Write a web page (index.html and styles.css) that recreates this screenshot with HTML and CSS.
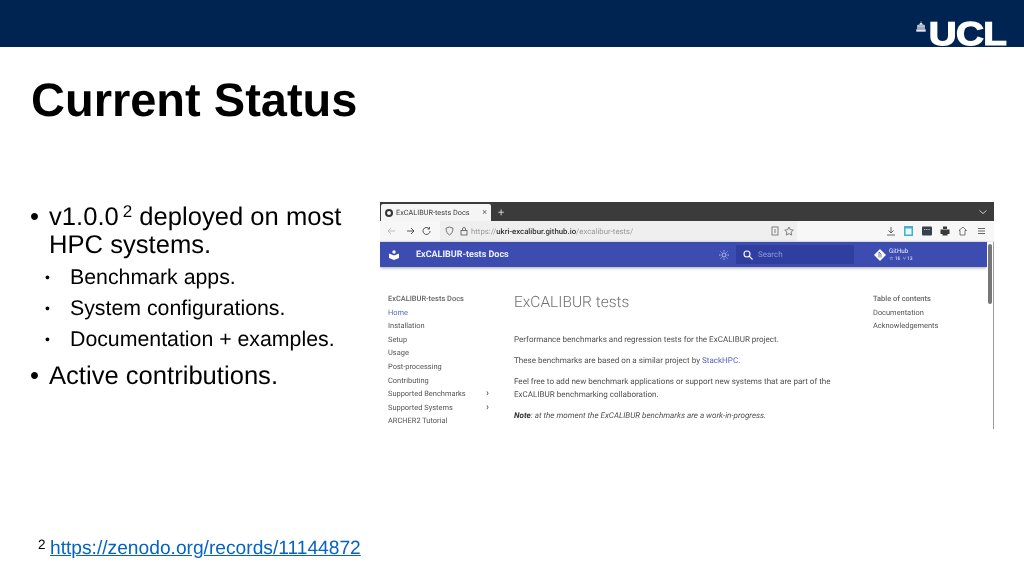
FILE: index.html
```html
<!DOCTYPE html>
<html lang="en">
<head>
<meta charset="utf-8">
<title>Current Status</title>
<link rel="stylesheet" href="styles.css">
</head>
<body>
<div class="slide">
  <header class="band">
    <div class="logo">
      <svg class="portico" width="10" height="11" viewBox="0 0 10 11"><path d="M5 0v1.500M4 2h2v1H4zM1 4.500L5 3l4 1.500zM1.500 5h7v3h-7zM.5 8.500h9v2h-9z" fill="#dfe3ea" stroke="#dfe3ea" stroke-width=".4"/><path d="M3 5.500v2.500M5 5.500v2.500M7 5.500v2.500" stroke="#002452" stroke-width=".6"/></svg>
      <span class="wordmark">UCL</span>
    </div>
  </header>
  <h1 class="title">Current Status</h1>
  <main class="content">
    <div class="points">
      <p class="lvl1"><span class="dot">•</span><span>v1.0.0<sup class="ref">2</sup> deployed on most<br>HPC systems.</span></p>
      <p class="lvl2"><span class="dot2">•</span><span>Benchmark apps.</span></p>
      <p class="lvl2"><span class="dot2">•</span><span>System configurations.</span></p>
      <p class="lvl2"><span class="dot2">•</span><span>Documentation + examples.</span></p>
      <p class="lvl1 last"><span class="dot">•</span><span>Active contributions.</span></p>
    </div>
    <div class="shot">
      <div class="tabs">
        <div class="tab">
          <svg width="8" height="8" viewBox="0 0 8 8"><circle cx="4" cy="4" r="3" fill="none" stroke="#333" stroke-width="2"/></svg>
          <span class="tab-name">ExCALIBUR-tests Docs</span>
          <span class="tab-x">×</span>
        </div>
        <span class="plus">+</span>
        <svg class="chev" width="10" height="6" viewBox="0 0 10 6"><path d="M1.500 1.500L5 4.500l3.500-3" fill="none" stroke="#ccc"/></svg>
      </div>
      <div class="toolbar">
        <svg class="nav" width="44" height="10" viewBox="0 0 44 10" fill="none" stroke-width=".9"><path d="M8 5H1M4 2L1 5l3 3" stroke="#b8b8b8"/><path d="M20 5h7M24 2l3 3-3 3" stroke="#444"/><path d="M43 5a3.500 3.500 0 1 1-1-2.500M42.500 1v2h-2" stroke="#444"/></svg>
        <div class="urlbar">
          <svg width="25" height="10" viewBox="0 0 25 10" fill="none" stroke="#555" stroke-width=".8"><path d="M4.500 1L8 2.200C8 5.500 6.500 8 4.500 9 2.500 8 1 5.500 1 2.200z"/><rect x="16" y="4.500" width="6" height="4.500"/><path d="M17.500 4.500V3a1.500 1.500 0 0 1 3 0v1.500"/></svg>
          <span class="url"><span class="faint">https://</span><b>ukri-excalibur.github.io</b><span class="faint">/excalibur-tests/</span></span>
          <svg class="url-end" width="24" height="10" viewBox="0 0 24 10" fill="none" stroke="#666" stroke-width=".8"><rect x="1" y="1" width="6" height="8"/><path d="M4 3v4"/><path d="M18 1l1.300 2.700 3 .4-2.200 2 .6 3-2.700-1.500-2.700 1.500.6-3-2.200-2 3-.4z"/></svg>
        </div>
        <div class="tools">
          <svg width="10" height="10" viewBox="0 0 10 10" fill="none" stroke="#555" stroke-width=".9"><path d="M5 1v6M2.500 4.500L5 7l2.500-2.500M1 9h8"/></svg>
          <svg width="10" height="10" viewBox="0 0 10 10"><rect width="9" height="10" fill="#3fb3c8"/><rect x="1.500" y="2.500" width="6" height="6" fill="#e8f6f8"/></svg>
          <svg width="10" height="10" viewBox="0 0 10 10"><rect width="10" height="9" y=".5" rx="1" fill="#36424a"/><path d="M2 3.500h6" stroke="#c6c6c6" stroke-dasharray="1 .8"/></svg>
          <svg width="10" height="10" viewBox="0 0 10 10"><path d="M3 .5h4V3H3zM.5 3.500h9V8h-2v1.500h-5V8h-2z" fill="#3a3a3a"/></svg>
          <svg width="10" height="10" viewBox="0 0 10 10" fill="none" stroke="#555" stroke-width=".8"><path d="M5 1L8.500 4.500 7 4.500V9H2V4.500H1z"/></svg>
          <svg width="10" height="10" viewBox="0 0 10 10" stroke="#666"><path d="M2 2.500h7M2 5h7M2 7.500h7"/></svg>
        </div>
      </div>
      <div class="page">
        <div class="doc">
          <div class="docbar">
            <svg class="doclogo" width="10" height="10" viewBox="0 0 10 10"><circle cx="5" cy="2" r="1.700" fill="#fff"/><path d="M0 3.500L5 5.500 10 3.500V8L5 10 0 8z" fill="#fff"/></svg>
            <span class="docname">ExCALIBUR-tests Docs</span>
            <svg class="sun" width="10" height="10" viewBox="0 0 10 10" fill="none" stroke="#e8eaf6" stroke-width=".7"><circle cx="5" cy="5" r="2"/><path d="M5 0v1.500M5 8.500V10M0 5h1.500M8.500 5H10M1.500 1.500l1 1M7.500 7.500l1 1M1.500 8.500l1-1M7.500 2.500l1-1"/></svg>
            <div class="search">
              <svg width="10" height="10" viewBox="0 0 10 10" fill="none" stroke="#fff" stroke-width="1.100"><circle cx="4" cy="4" r="3"/><path d="M6.200 6.200L9.500 9.500"/></svg>
              <span>Search</span>
            </div>
            <div class="repo">
              <svg width="12" height="12" viewBox="0 0 12 12"><path d="M6 0l6 6-6 6-6-6z" fill="#fff"/><path d="M5 3l2 2v3.500M5 3v5.500" stroke="#3c4cb0" stroke-width=".8" fill="none"/></svg>
              <div class="repo-text"><span>GitHub</span><span class="repo-facts">☆ 16 &nbsp;⑂ 13</span></div>
            </div>
          </div>
          <div class="docbody">
            <nav class="side">
              <div class="side-head">ExCALIBUR-tests Docs</div>
              <div class="active">Home</div>
              <div>Installation</div>
              <div>Setup</div>
              <div>Usage</div>
              <div>Post-processing</div>
              <div>Contributing</div>
              <div class="more"><span>Supported Benchmarks</span><span>›</span></div>
              <div class="more"><span>Supported Systems</span><span>›</span></div>
              <div>ARCHER2 Tutorial</div>
            </nav>
            <article class="article">
              <h2>ExCALIBUR tests</h2>
              <p>Performance benchmarks and regression tests for the ExCALIBUR project.</p>
              <p>These benchmarks are based on a similar project by <span class="link">StackHPC</span>.</p>
              <p>Feel free to add new benchmark applications or support new systems that are part of the<br>ExCALIBUR benchmarking collaboration.</p>
              <p><em><b>Note</b>: at the moment the ExCALIBUR benchmarks are a work-in-progress.</em></p>
            </article>
            <aside class="toc">
              <div class="side-head">Table of contents</div>
              <div>Documentation</div>
              <div>Acknowledgements</div>
            </aside>
          </div>
        </div>
        <div class="scrollbar"><div class="thumb"></div></div>
      </div>
    </div>
  </main>
  <footer class="foot"><sup class="foot-ref">2</sup><a class="foot-link" href="#">https://zenodo.org/records/11144872</a></footer>
</div>
</body>
</html>
```
FILE: styles.css
```css
* { box-sizing: border-box; }
html, body { margin: 0; padding: 0; }
body { width: 1024px; height: 576px; overflow: hidden; background: #fff; font-family: "Liberation Sans", Arial, sans-serif; color: #000; text-rendering: geometricPrecision; }
.slide { width: 1024px; height: 576px; display: flex; flex-direction: column; will-change: transform; }
.band { height: 47px; flex: none; background: #002452; display: flex; justify-content: flex-end; align-items: flex-end; padding-right: 18px; }
.logo { display: flex; align-items: flex-start; gap: 14px; height: 25px; }
.portico { margin-top: -1px; }
.wordmark { font-weight: 700; font-size: 33px; line-height: 24px; height: 25px; color: #fff; -webkit-text-stroke: 1.200px #fff; letter-spacing: -.5px; display: block; transform: scaleX(1.170); transform-origin: right center; }
.title { margin: 23px 0 0 31px; font-size: 47px; line-height: 60px; font-weight: 700; height: 60px; }
.content { display: flex; margin-top: 72px; height: 233px; flex: none; }
.points { width: 380px; flex: none; padding-top: 1px; }
.points p { margin: 0; display: flex; }
.lvl1 { font-size: 25.600px; line-height: 28px; padding-left: 30px; }
.dot { width: 19px; flex: none; }
.lvl2 { font-size: 21.300px; line-height: 31px; padding-left: 45px; }
.lvl1 + .lvl2 { margin-top: 3px !important; }
.dot2 { width: 25px; flex: none; font-size: 14px; }
.last { margin-top: 7px !important; }
.ref { font-size: 17px; line-height: 0; vertical-align: baseline; position: relative; top: -8px; margin: 0 0 0 4px; }
.shot { width: 614px; height: 227px; flex: none; font-family: Roboto, sans-serif; color: #555; filter: blur(.35px); display: flex; flex-direction: column; overflow: hidden; }
.tabs { height: 19px; flex: none; background: #3b3b3b; display: flex; align-items: flex-end; padding-left: 1px; }
.tab { width: 110px; height: 17px; background: #f5f5f5; border-radius: 2px 2px 0 0; display: flex; align-items: center; gap: 3px; padding-left: 4px; font-size: 7.300px; color: #444; }
.tab-name { flex: 1; }
.tab-x { padding-right: 4px; font-size: 9px; color: #666; }
.plus { color: #ccc; font-size: 11px; line-height: 17px; margin-left: 7px; }
.chev { margin: 0 6px 6px auto; }
.toolbar { height: 21px; flex: none; background: #f7f7f7; display: flex; align-items: center; padding-left: 7px; border-bottom: 1px solid #e8e8e8; }
.nav { flex: none; }
.urlbar { margin-left: 9px; width: 357px; height: 20px; background: #efefef; display: flex; align-items: center; padding: 0 2px 0 5px; font-size: 7.800px; gap: 1px; flex: none; }
.url { color: #333; flex: 1; white-space: nowrap; }
.url b { font-weight: 500; }
.faint { color: #9a9a9a; }
.tools { display: flex; gap: 8px; margin-left: 89px; flex: none; }
.tools svg { flex: none; }
.page { flex: 1; display: flex; min-height: 0; border-right: 1px solid #9a9a9a; }
.doc { width: 607px; flex: none; display: flex; flex-direction: column; }
.docbar { height: 25px; flex: none; background: #3c4cb0; box-shadow: 0 1px 3px rgba(0,0,0,.35); color: #fff; display: flex; align-items: center; padding-left: 9px; }
.doclogo { flex: none; }
.docname { font-size: 9px; font-weight: 700; margin-left: 17px; flex: none; width: 304px; color: #eef0fa; }
.sun { margin-left: -1px; flex: none; }
.search { width: 118px; height: 19px; margin-left: 7px; background: #303f9f; display: flex; align-items: center; gap: 5px; padding-left: 7px; font-size: 8px; color: #8c97d6; flex: none; border-radius: 1px; }
.repo { display: flex; align-items: center; gap: 3px; margin-left: 20px; }
.repo-text { display: flex; flex-direction: column; font-size: 6.300px; line-height: 8px; color: #e8eaf6; }
.repo-facts { font-size: 5px; white-space: nowrap; }
.docbody { flex: 1; display: flex; min-height: 0; padding: 25px 0 0 8px; font-size: 7.450px; line-height: 13.600px; }
.side { width: 104px; flex: none; }
.side-head { color: #666; font-weight: 500; }
.active { color: #5c6bc0; }
.more { display: flex; justify-content: space-between; padding-right: 3px; font-size: 7.450px; }
.more span:last-child { font-size: 10px; line-height: 13px; color: #444; }
.article { margin-left: 22px; width: 337px; flex: none; font-size: 8.050px; color: #505050; }
.article h2 { margin: 0 0 21px; font-size: 15.500px; line-height: 20px; font-weight: 300; color: #707070; }
.article p { margin: 0 0 7.400px; line-height: 13.500px; }
.article em b { color: #333; }
.link { color: #5361c0; }
.toc { margin-left: 22px; flex: none; }
.scrollbar { flex: 1; padding: 2px 1px 0 1px; background: #fff; }
.thumb { width: 3.500px; height: 60px; background: #777; border-radius: 2px; }
.foot { margin: auto 0 11px; height: 28px; padding-left: 38px; display: flex; align-items: flex-start; flex: none; font-size: 19.200px; line-height: 24px; }
.foot-ref { font-size: 13.500px; line-height: 16px; margin-right: 4.500px; vertical-align: baseline; }
.foot-link { color: #0563c1; text-decoration: underline; }
```
